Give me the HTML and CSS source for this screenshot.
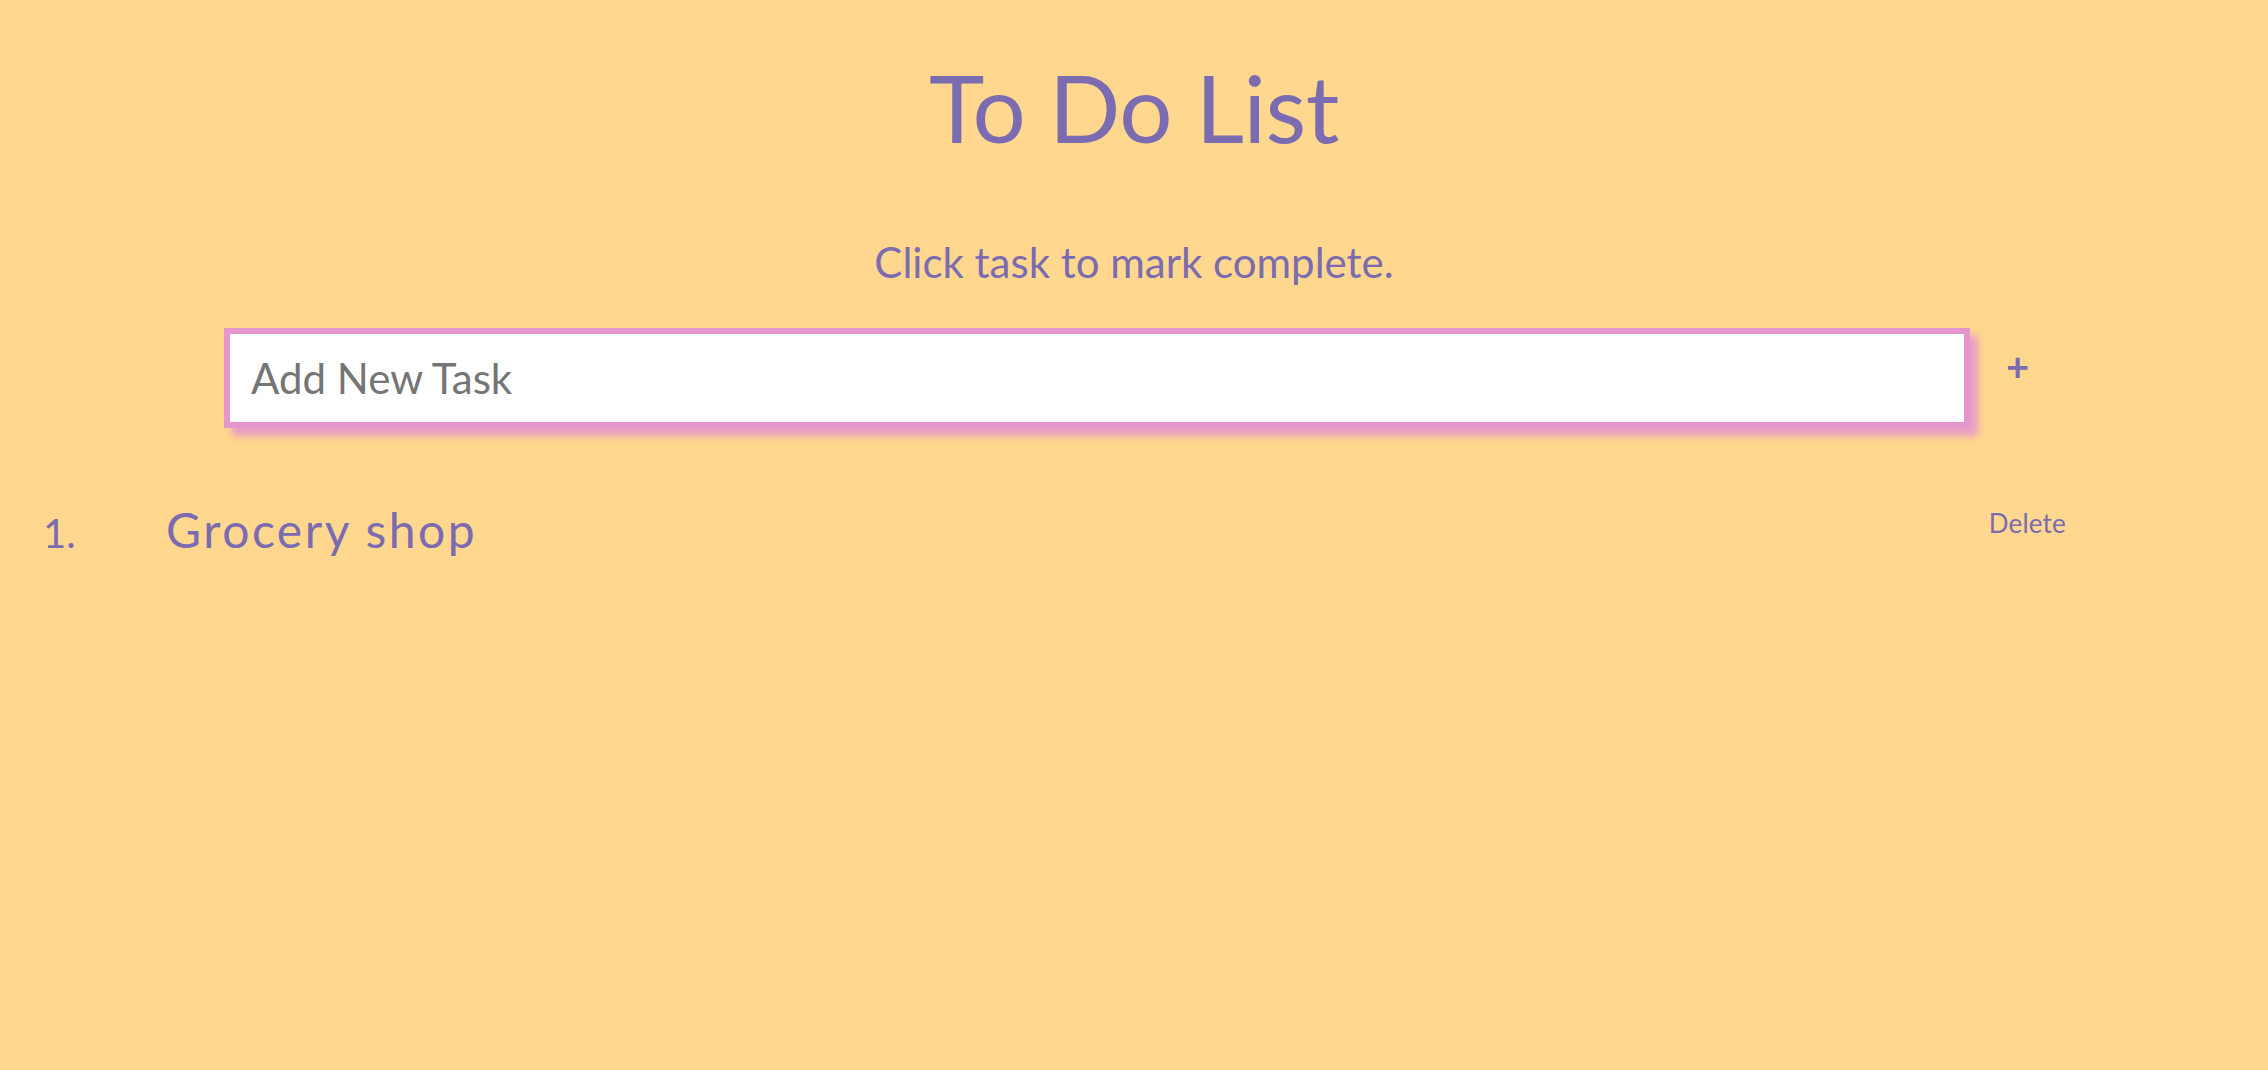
FILE: index.html
```html
<!DOCTYPE html>
<html lang="en">
<head>
<meta charset="utf-8">
<title>To Do List</title>
<link rel="stylesheet" href="styles.css">
</head>
<body>
<main class="app">
  <h1 class="title">To Do List</h1>
  <p class="hint">Click task to mark complete.</p>
  <form class="add-row">
    <input class="task-input" type="text" placeholder="Add New Task">
    <button class="add-btn" type="button">+</button>
  </form>
  <ol class="tasks">
    <li class="task">
      <span class="task-num">1.</span>
      <span class="task-text">Grocery shop</span>
      <button class="delete-btn" type="button">Delete</button>
    </li>
  </ol>
</main>
</body>
</html>
```
FILE: styles.css
```css
html, body {
  margin: 0;
  padding: 0;
}
body {
  background: #ffd78e;
  color: #7b6bb1;
  font-family: Lato, "Open Sans", sans-serif;
  min-height: 1070px;
}
.app {
  display: flex;
  flex-direction: column;
}
.title {
  margin: 51px 0 0;
  text-align: center;
  font-size: 94px;
  font-weight: 400;
  line-height: 112px;
  letter-spacing: -0.5px;
}
.hint {
  margin: 74px 0 0;
  text-align: center;
  font-size: 42px;
  line-height: 50px;
}
.add-row {
  display: flex;
  justify-content: center;
  align-items: flex-start;
  gap: 21px;
  margin-top: 41px;
}
.task-input {
  box-sizing: border-box;
  width: 1746px;
  height: 100px;
  border: 6px solid #e497cc;
  background: #fff;
  padding: 0 21px;
  font-family: inherit;
  font-size: 42px;
  color: #555;
  outline: none;
  box-shadow: 8px 8px 7px rgba(228, 151, 204, 0.9);
}
.task-input::placeholder {
  color: #757575;
}
.add-btn {
  background: none;
  border: none;
  padding: 0;
  margin-top: 18px;
  width: 53px;
  color: #7b6bb1;
  font-family: inherit;
  font-size: 40px;
  font-weight: 700;
  line-height: 40px;
}
.tasks {
  list-style: none;
  margin: 74px 0 0;
  padding: 0;
}
.task {
  display: flex;
  align-items: baseline;
}
.task-num {
  width: 166px;
  padding-left: 43px;
  box-sizing: border-box;
  font-size: 40px;
  line-height: 48px;
}
.task-text {
  flex: 1;
  font-size: 48px;
  line-height: 56px;
  letter-spacing: 2.5px;
}
.delete-btn {
  align-self: flex-start;
  background: none;
  border: none;
  padding: 0;
  margin: 5px 202px 0 0;
  color: #7b6bb1;
  font-family: inherit;
  font-size: 26px;
  line-height: 32px;
  letter-spacing: 0.2px;
}
```
